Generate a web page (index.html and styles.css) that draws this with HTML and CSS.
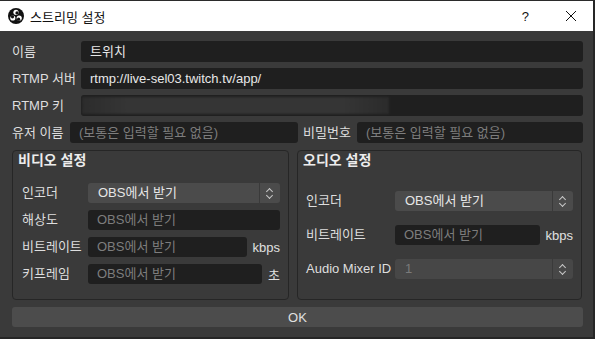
FILE: index.html
```html
<!DOCTYPE html>
<html lang="ko">
<head>
    <meta charset="UTF-8">
    <title>스트리밍 설정</title>
    <link rel="stylesheet" href="styles.css">
</head>
<body>
    <div class="window">
        <div class="titlebar">
            <svg class="logo" width="16" height="16" viewBox="0 0 16 16">
                <circle cx="8" cy="8" r="8" fill="#111"/>
                <circle cx="8" cy="4.3" r="2.6" fill="#fff"/>
                <circle cx="4.8" cy="10" r="2.6" fill="#fff"/>
                <circle cx="11.2" cy="10" r="2.6" fill="#fff"/>
                <circle cx="9" cy="4.9" r="1.6" fill="#111"/>
                <circle cx="4.5" cy="8.8" r="1.6" fill="#111"/>
                <circle cx="10.6" cy="11.2" r="1.6" fill="#111"/>
            </svg>
            <span class="title">스트리밍 설정</span>
            <span class="help">?</span>
            <svg class="close" width="12" height="12" viewBox="0 0 12 12">
                <path d="M1 1 L11 11 M11 1 L1 11" stroke="#111" stroke-width="1"/>
            </svg>
        </div>

        <div class="content">
            <div class="form">
                <label>이름</label>
                <div class="input">트위치</div>
                <label>RTMP 서버</label>
                <div class="input">rtmp://live-sel03.twitch.tv/app/</div>
                <label>RTMP 키</label>
                <div class="input key"><div class="blur"></div></div>
            </div>

            <div class="cred-row">
                <label class="user-label">유저 이름</label>
                <div class="input placeholder user">(보통은 입력할 필요 없음)</div>
                <label class="pass-label">비밀번호</label>
                <div class="input placeholder pass">(보통은 입력할 필요 없음)</div>
            </div>

            <div class="groups">
                <div class="group video">
                    <div class="group-title">비디오 설정</div>
                    <div class="group-rows">
                        <label>인코더</label>
                        <div class="combo"><span>OBS에서 받기</span><span class="spin"><i class="up"></i><i class="down"></i></span></div>
                        <label>해상도</label>
                        <div class="input placeholder">OBS에서 받기</div>
                        <label>비트레이트</label>
                        <div class="with-unit"><div class="input placeholder">OBS에서 받기</div><span class="unit">kbps</span></div>
                        <label>키프레임</label>
                        <div class="with-unit"><div class="input placeholder">OBS에서 받기</div><span class="unit">초</span></div>
                    </div>
                </div>

                <div class="group audio">
                    <div class="group-title">오디오 설정</div>
                    <div class="group-rows">
                        <label>인코더</label>
                        <div class="combo"><span>OBS에서 받기</span><span class="spin"><i class="up"></i><i class="down"></i></span></div>
                        <label>비트레이트</label>
                        <div class="with-unit"><div class="input placeholder">OBS에서 받기</div><span class="unit">kbps</span></div>
                        <label>Audio Mixer ID</label>
                        <div class="combo disabled"><span>1</span><span class="spin"><i class="up"></i><i class="down"></i></span></div>
                    </div>
                </div>
            </div>

            <button class="ok">OK</button>
        </div>
    </div>
</body>
</html>
```

FILE: styles.css
```css
body { margin: 0; background: #262626; font-family: "Liberation Sans", "Noto Sans CJK KR", sans-serif; font-size: 13px; color: #dedede; }
.window { width: 593px; height: 336px; border-top: 1px solid #2b2b2b; background: #3a3a3a; overflow: hidden; }

.titlebar { height: 30px; background: #fff; display: flex; align-items: center; padding-left: 8px; color: #111; }
.logo { margin-right: 6px; }
.title { font-size: 13px; flex: 1; }
.help { font-size: 13px; margin-right: 36px; }
.close { margin-right: 16px; }

.content { padding: 10px 10px 9px 12px; }

label { white-space: nowrap; line-height: 20px; }
.input { height: 21px; line-height: 21px; background: #1f1f1f; border-radius: 3px; padding-left: 9px; color: #e8e8e8; box-sizing: border-box; white-space: nowrap; overflow: hidden; }
.placeholder { color: #7d7d7d; }

.form { display: grid; grid-template-columns: 69px 1fr; row-gap: 6px; }
.form label { line-height: 21px; }
.key { padding: 2px 0 2px 1px; }
.blur { width: 307px; height: 17px; background: linear-gradient(to right, #2c2c2c, #353535 15%, #353535 85%, #2b2b2b); filter: blur(1px); }

.cred-row { display: flex; margin-top: 6px; }
.cred-row label { line-height: 21px; }
.user-label { width: 58px; }
.user { width: 228px; }
.pass-label { margin-left: 5px; width: 54px; }
.pass { flex: 1; }

.groups { display: flex; gap: 8px; margin-top: 7px; height: 150px; }
.group { border: 1px solid #262626; border-radius: 4px; box-sizing: border-box; }
.video { width: 277px; }
.audio { flex: 1; margin-right: 1px; }
.group-title { font-weight: bold; font-size: 14px; height: 18px; line-height: 18px; margin-left: 5px; color: #ececec; }

.group-rows { display: grid; align-items: center; }
.group-rows .input, .combo { height: 20px; line-height: 20px; }
.video .group-rows { grid-template-columns: 66px 1fr; row-gap: 7px; padding: 0 8px 0 9px; margin-top: 14px; }
.audio .group-rows { grid-template-columns: 89px 1fr; row-gap: 14px; padding: 0 8px 0 8px; margin-top: 22px; }

.with-unit { display: flex; align-items: center; }
.with-unit .input { flex: 1; }
.unit { margin-left: 6px; color: #e0e0e0; }

.combo { display: flex; background: #4b4b4b; border-radius: 3px; color: #e6e6e6; }
.combo span:first-child { flex: 1; padding-left: 10px; }
.combo.disabled { background: #474747; color: #7a7a7a; }
.spin { width: 20px; border-left: 1px solid #3a3a3a; position: relative; }
.spin i { position: absolute; left: 7px; width: 4px; height: 4px; border-left: 1px solid #c8c8c8; border-top: 1px solid #c8c8c8; }
.spin .up { top: 6px; transform: rotate(45deg); }
.spin .down { top: 10px; transform: rotate(225deg); }

.ok { display: block; width: 100%; height: 20px; margin-top: 7px; background: #4c4c4c; border: none; border-radius: 3px; color: #e0e0e0; font-family: inherit; font-size: 13px; padding: 0; }
```
